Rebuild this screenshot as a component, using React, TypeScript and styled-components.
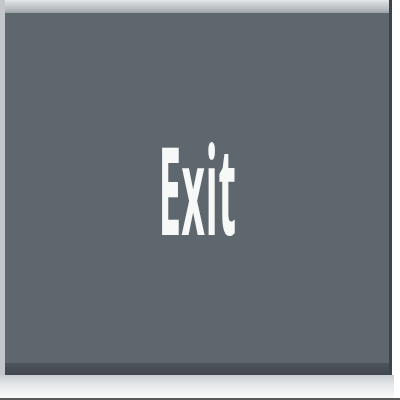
import React from "react";
import styled, { createGlobalStyle } from "styled-components";

const Global = createGlobalStyle`
  html, body { margin: 0; padding: 0; background: #ffffff; }
`;

const Page = styled.div`
  width: 400px;
  height: 400px;
  display: flex;
  flex-direction: column;
  background: #ffffff;
  box-sizing: border-box;
`;

const Plate = styled.div`
  height: 375px;
  margin-right: 8px;
  display: flex;
  flex-direction: column;
  border-left: 5px solid #c3c7cb;
  border-right: 3px solid #3d454b;
  box-sizing: border-box;
`;

const TopBevel = styled.div`
  height: 13px;
  background: linear-gradient(#e6e8ea 0%, #d2d5d8 25%, #b8bcc0 70%, #9da2a7 100%);
`;

const Face = styled.div`
  flex: 1;
  background: #5f676e;
  display: flex;
  align-items: center;
  justify-content: center;
`;

const Label = styled.span`
  display: inline-block;
  font-family: "Open Sans", "Liberation Sans", sans-serif;
  font-weight: 700;
  font-size: 122px;
  line-height: 1;
  color: #f7f8f8;
  transform: scaleX(0.33);
  margin-top: -1px;
  margin-left: 2px;
  letter-spacing: 2px;
`;

const BottomBevel = styled.div`
  height: 12px;
  background: linear-gradient(#4d545b, #40474e);
`;

const Shadow = styled.div`
  flex: 1;
  background: linear-gradient(#c9cdd0 0%, #e4e6e8 40%, #fbfbfb 100%);
  margin-right: 6px;
`;

const BaseLine = styled.div`
  height: 2px;
  background: #595959;
`;

export default function App() {
  return (
    <>
      <Global />
      <Page>
        <Plate>
          <TopBevel />
          <Face>
            <Label>Exit</Label>
          </Face>
          <BottomBevel />
        </Plate>
        <Shadow />
        <BaseLine />
      </Page>
    </>
  );
}
